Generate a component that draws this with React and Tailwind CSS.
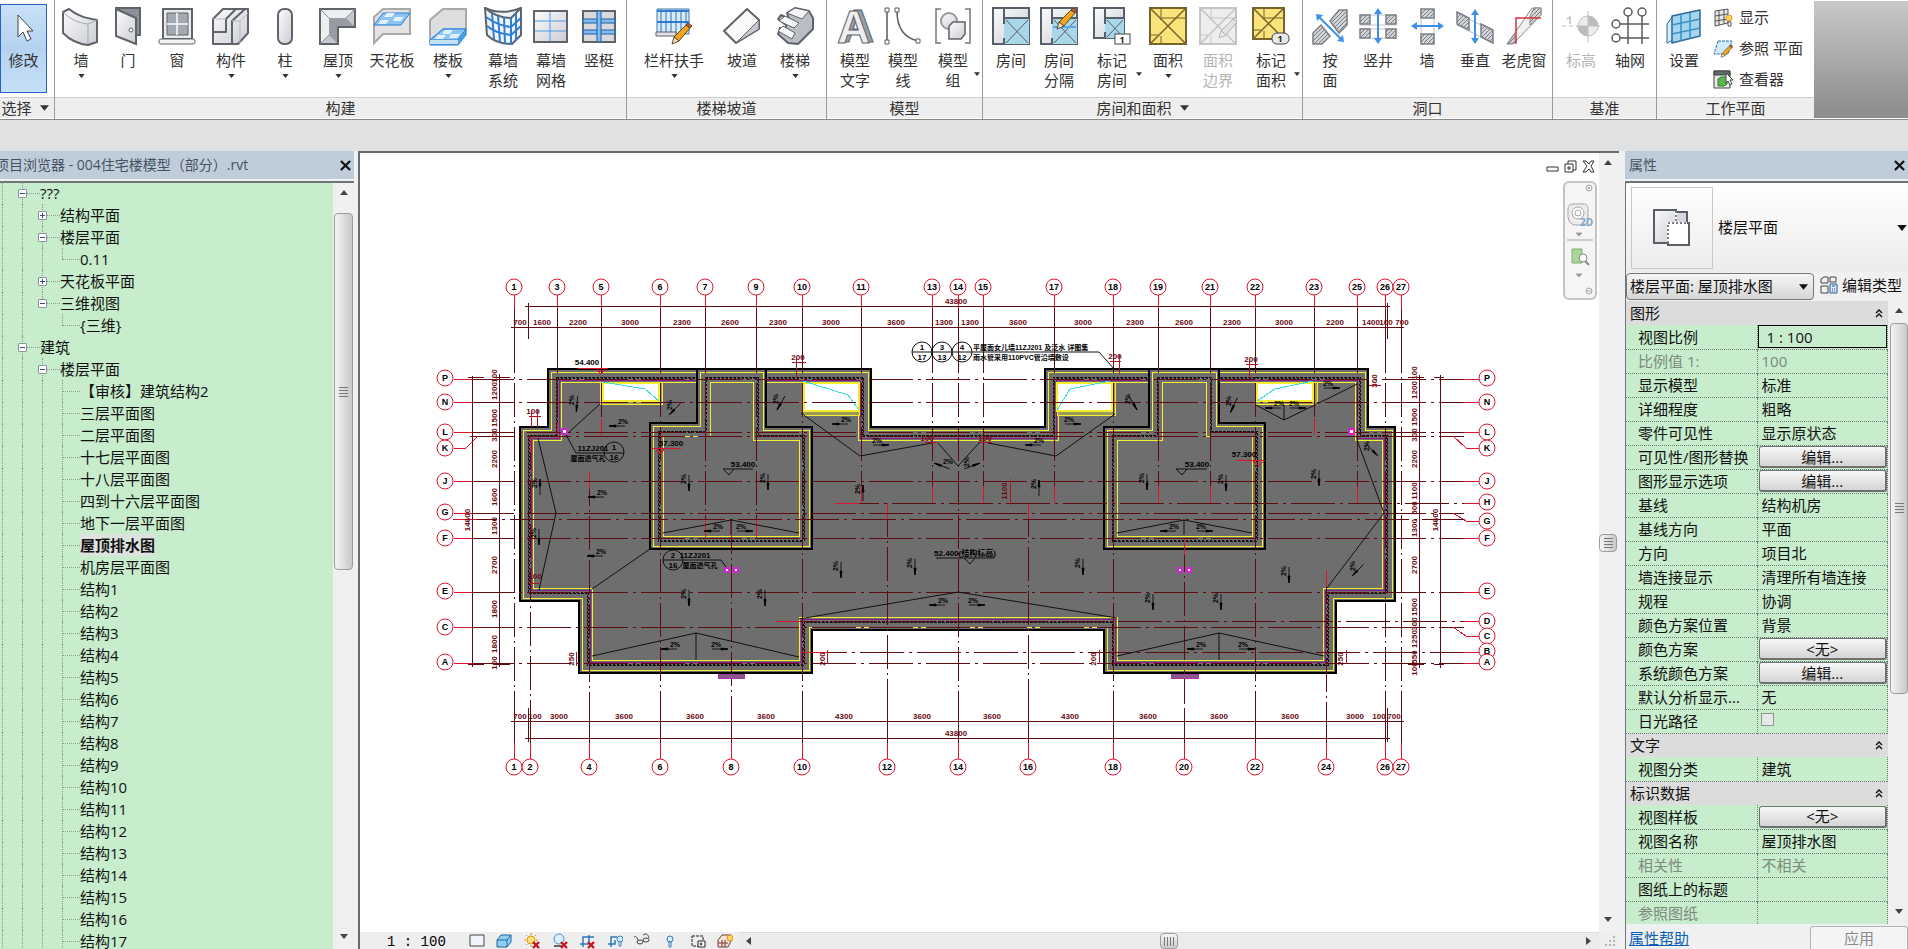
import React, { useState } from "react";

/* ---------- ribbon icons ---------- */

const INK = "#606369";
const BLUE = "#2d7fd6";

function Pencil({ x = 0, y = 0, muted }) {
  return (
    <g transform={`translate(${x} ${y})`} stroke={muted ? "#b5b5b5" : "#5b4a2a"} strokeWidth="1">
      <path d="M2 12 14 0l4 3L7 16z" fill={muted ? "#e2e2e2" : "#f2a51d"} />
      <path d="M14 0l2-2 4 3-2 2z" fill={muted ? "#d8d8d8" : "#c9532c"} />
      <path d="M2 12l5 4-7 3z" fill={muted ? "#eee" : "#f7e3bd"} />
    </g>
  );
}

function RoomBase({ muted, yellow, size = 37 }) {
  const s = size;
  const line = muted ? "#c4c4c4" : yellow ? "#75652a" : "#55606a";
  return (
    <g stroke={line} strokeWidth="2" fill="none">
      <rect x="1" y="1" width={s - 1} height={s - 1} fill={muted ? "#ededed" : yellow ? "#fbe27a" : "url(#metal)"} />
      {!muted && !yellow && <path d={`M12 12H${s}V${s}H12z`} fill="#a9d6e8" stroke="none" />}
      {yellow || muted ? (
        <g strokeWidth="1">
          <path d={`M2 2 ${s - 1} ${s - 1}M${s - 1} 2 2 ${s - 1}`} strokeWidth="1.5" />
          <path d={`M12 1v12M12 11h${s - 12}M12 ${s - 8}v8M1 ${s - 9}h8`} />
        </g>
      ) : (
        <g>
          <path d={`M12 1v16M12 11h${s - 12}M12 ${s - 6}v6`} />
          <path d={`M14 13 ${s - 1} ${s - 1}M${s - 1} 13 14 ${s - 1}`} strokeWidth="1" />
        </g>
      )}
    </g>
  );
}

const ICONS = {
  cursor: (
    <path d="M13 6v22l5-5 4 9 4-2-4-8h6z" fill="#fff" stroke="#444" strokeWidth="1" />
  ),
  wall: (
    <g stroke={INK} strokeWidth="2" strokeLinejoin="round">
      <path d="M1 5 7 2c8 7 17 9 28 11v22l-9 3C15 37 7 32 1 26z" fill="url(#metal)" />
      <path d="M1 5c8 8 16 11 25 12l9-4M26 17v20" fill="none" stroke="#a4a7ac" strokeWidth="1" />
    </g>
  ),
  door: (
    <g stroke={INK} strokeWidth="2">
      <path d="M7 1h24v27H7z" fill="#8b9099" />
      <path d="M7 2l20 9v26L7 29z" fill="url(#metal)" />
      <circle cx="22" cy="23" r="2" fill="#fff" strokeWidth="1" />
    </g>
  ),
  window: (
    <g stroke={INK} strokeWidth="2">
      <path d="M5 2h29v30H5z" fill="#e9eaec" />
      <path d="M9 6h21v22H9z" fill="#a3a9b3" strokeWidth="1" />
      <path d="M19 6v22M9 17h21" stroke="#e6e8ea" />
      <rect x="1" y="32" width="36" height="5" rx="2" fill="#f4f4f4" strokeWidth="1" />
    </g>
  ),
  component: (
    <g stroke={INK} strokeWidth="2" strokeLinejoin="round">
      <path d="M1 12 11 2h25v24L26 37H1z" fill="url(#metal)" />
      <path d="M1 25h13V12L24 2M20 37V14L33 2" fill="none" />
      <path d="M1 12h13M20 14h8l8-8M28 14v22" fill="none" stroke="#b4b7bb" strokeWidth="1" />
    </g>
  ),
  column: <rect x="12" y="2" width="14" height="35" rx="6" fill="url(#metal)" stroke={INK} strokeWidth="2" />,
  roof: (
    <g stroke={INK} strokeWidth="2">
      <path d="M1 2h35v18H19v17H1z" fill="#c4c7cc" />
      <path d="M1 2h35l-9 9H10v17l-9 9z" fill="#eceef0" stroke="none" />
      <path d="M10 11h17l9 9H19v17l-9-9z" fill="#989da5" stroke="none" />
      <path d="M1 2h35v18H19v17H1z" fill="none" />
      <path d="M1 2l18 18M36 2l-9 9M1 37l9-9" stroke="#8b8f96" strokeWidth="1" />
    </g>
  ),
  ceiling: (
    <g strokeWidth="2">
      <path d="M10 2h27v25H10L1 36V10z" fill="#e3e3e4" stroke="#a8a8a8" />
      <path d="M10 6h27l-9 12H1z" fill="#8cc5f4" stroke={BLUE} strokeWidth="1" />
      <path d="M14 6h8l-3 4h-8zM22 10h9l-3 4h-8zM8 13h8l-3 4H5z" fill="#e1f1fd" />
    </g>
  ),
  floor: (
    <g strokeWidth="2">
      <path d="M14 2h23v21H14L1 34V13z" fill="#dddedf" stroke="#a8a8a8" />
      <path d="M14 22h23v6l-8 10H1v-5z" fill="#4ba3e6" stroke={BLUE} strokeWidth="1" />
      <path d="M14 22h23l-8 11H1z" fill="#8cc5f4" stroke={BLUE} strokeWidth="1" />
      <path d="M1 33h28v4H1z" fill="#c4e2f8" />
      <path d="M16 23h8l-3 4h-8zM22 27h9l-3 4h-8zM9 28h8l-3 4H6z" fill="#e1f1fd" />
    </g>
  ),
  curtainSystem: (
    <g strokeWidth="2" fill="none">
      <path d="M1 1c10 5 24 5 36 0v27L28 37C18 37 9 34 3 28z" fill="#f1f4f7" stroke={INK} />
      <path d="M1 1c8 7 17 10 26 10L37 1" stroke={INK} />
      <path d="M27 11v26M2 10c8 6 16 9 25 10l10-9M3 19c7 6 15 8 24 9l10-9M8 6l2 26M14 9l2 26M20 10l1 27M32 6v28" stroke={BLUE} />
    </g>
  ),
  curtainGrid: (
    <g strokeWidth="2">
      <path d="M2 4h33v31H2z" fill="url(#metal)" stroke={INK} />
      <path d="M18 5v29M3 14h31M3 24h31" stroke="#4b9be8" strokeWidth="1" />
    </g>
  ),
  mullion: (
    <g strokeWidth="2">
      <path d="M3 4h32v31H3z" fill="#d7d9dd" stroke={INK} />
      <path d="M3 12h32v4H3zM3 23h32v4H3z" fill="#7dbcf5" stroke="#1f5f9e" strokeWidth="1" />
      <path d="M17 4h4v31h-4z" fill="#7dbcf5" stroke="#1f5f9e" strokeWidth="1" />
    </g>
  ),
  railing: (
    <g>
      <path d="M2 2h32v25H2z" fill="#d9ebfb" stroke="#3f75ad" />
      <path d="M2 4h32M2 15h32" stroke={BLUE} strokeWidth="2" />
      <path d="M6 3v23M11 3v23M16 3v23M21 3v23M26 3v23M31 3v23" stroke="#2e74bd" />
      <path d="M1 25h20v4H1z" fill="#dfe2e6" stroke={INK} />
      <Pencil x={17} y={18} />
    </g>
  ),
  ramp: (
    <g stroke={INK} strokeWidth="2" strokeLinejoin="round">
      <path d="M1 24 24 2l12 11v9L13 36z" fill="#fafafa" />
      <path d="M36 13v9L13 36z" fill="#c5c8cd" strokeWidth="1" />
    </g>
  ),
  stairs: (
    <g stroke={INK} strokeWidth="2" strokeLinejoin="round">
      <path d="M11 6 19 1l14 3 4 7v11L22 37l-10-1-10-9 2-6 6 3v-6l-8-6 3-4 8 4z" fill="#b9bdc4" />
      <path d="M11 6l8-5 14 3-7 8zM3 14l6-5 14 7-5 5zM2 24l5-5 12 7-3 6z" fill="#f4f5f6" strokeWidth="1" />
    </g>
  ),
  modelText: (
    <g fontFamily="'Liberation Sans', Arial, sans-serif" fontWeight="700" fontSize="46" strokeWidth="1">
      <text x="5" y="35" fill="#9a9fa7" stroke={INK}>A</text>
      <text x="1" y="36" fill="#eceef0" stroke={INK}>A</text>
    </g>
  ),
  modelLine: (
    <g fill="#fff" stroke="#5a5a5a" strokeWidth="2">
      <path d="M3 4v30M13 4c0 17 8 27 21 30" fill="none" strokeWidth="1.5" />
      <path d="M1 1h4v4H1zM1 33h4v4H1zM11 1h4v4h-4zM32 32h4v4h-4z" strokeWidth="1" />
    </g>
  ),
  modelGroup: (
    <g stroke={INK} strokeWidth="2" fill="none">
      <path d="M7 2H2v34h5M31 2h5v34h-5" stroke="#777" strokeWidth="1.5" />
      <circle cx="15" cy="14" r="8" fill="url(#metal)" stroke="#999" />
      <path d="M15 19l4-4h12v12l-4 5H15z" fill="url(#metal)" strokeWidth="1.5" />
    </g>
  ),
  room: <RoomBase />,
  roomSplit: (
    <g>
      <RoomBase />
      <path d="M13 20h23" stroke="#55a8ee" strokeWidth="2" />
      <Pencil x={17} y={3} />
    </g>
  ),
  tagRoom: (
    <g>
      <RoomBase size={31} />
      <rect x="22" y="27" width="15" height="10" fill="#fff" stroke="#444" strokeWidth="1" />
      <text x="29" y="36" fontSize="9" fontWeight="700" textAnchor="middle" fill="#222">1</text>
    </g>
  ),
  area: <RoomBase yellow />,
  areaEdge: (
    <g>
      <RoomBase muted />
      <Pencil x={20} y={12} muted />
    </g>
  ),
  tagArea: (
    <g>
      <RoomBase yellow size={32} />
      <rect x="20" y="26" width="17" height="11" rx="5" fill="#e8e8e8" stroke="#444" strokeWidth="1" />
      <text x="28" y="35" fontSize="9" fontWeight="700" textAnchor="middle" fill="#222">1</text>
    </g>
  ),
  byFace: (
    <g stroke="#7b8087">
      <path d="M36 3v15l-8 8-9-12 9-11zM2 37V26l8-8 9 11-8 8z" fill="url(#hatch)" strokeWidth="1.5" />
      <path d="M7 9l24 24" stroke="#3d8fe8" strokeWidth="2" />
      <path d="M5 7l7 1-6 6zM33 35l-7-1 6-6z" fill="#3d8fe8" stroke="none" />
    </g>
  ),
  shaft: (
    <g stroke="#7b8087">
      <path d="M1 8h36M1 18h36M1 22h36M1 31h36" stroke="#c4c4c4" />
      <path d="M1 8h10v9H1zM27 8h10v9H27zM1 22h10v9H1zM27 22h10v9H27z" fill="url(#hatch)" strokeWidth="1.5" />
      <path d="M19 4v30" stroke="#3d8fe8" strokeWidth="2" />
      <path d="M19 1l4 6h-8zM19 37l4-6h-8z" fill="#3d8fe8" stroke="none" />
    </g>
  ),
  wallOpening: (
    <g stroke="#7b8087">
      <path d="M13 2v35M26 2v35" stroke="#c2c2c2" />
      <path d="M13 2h13v9H13zM13 27h13v10H13z" fill="url(#hatch)" strokeWidth="1.5" />
      <path d="M7 19h26" stroke="#3d8fe8" strokeWidth="2" />
      <path d="M3 19l6-4v8zM36 19l-6-4v8z" fill="#3d8fe8" stroke="none" />
    </g>
  ),
  vertical: (
    <g stroke="#7b8087">
      <path d="M1 6l36 18M1 18l36 18" stroke="#b9b9b9" />
      <path d="M1 5l12 6v12L1 17zM25 17l12 6v13l-12-6z" fill="url(#hatch)" strokeWidth="1.5" />
      <path d="M19 5v28" stroke="#3d8fe8" strokeWidth="2" />
      <path d="M19 2l4 6h-8zM19 37l4-6h-8z" fill="#3d8fe8" stroke="none" />
    </g>
  ),
  dormer: (
    <g stroke="#8c8c8c">
      <path d="M27 1h9v7L8 37H2z" fill="#f1f1f1" />
      <path d="M29 1h7v7L25 18V9zM2 37l8-10v9z" fill="url(#hatch)" />
      <path d="M36 11H11v26" fill="none" stroke="#d8323a" strokeWidth="1.5" />
    </g>
  ),
  level: (
    <g stroke="#c0c0c0">
      <path d="M0 19h4M7 19h4M14 19h24M26 4v32" strokeWidth="1" />
      <circle cx="26" cy="19" r="10" fill="#ececec" />
      <path d="M26 9a10 10 0 0 1 10 10H26zM26 29a10 10 0 0 1-10-10h10z" fill="#bcbcbc" />
      <path d="M5 12l3-2v7" fill="none" strokeWidth="1.5" />
    </g>
  ),
  grid: (
    <g fill="#fff" stroke="#5a5a5a" strokeWidth="1.5">
      <path d="M17 9v28M31 9v28M9 17h29M9 31h29" />
      <circle cx="17" cy="5" r="4" />
      <circle cx="31" cy="5" r="4" />
      <circle cx="5" cy="17" r="4" />
      <circle cx="5" cy="31" r="4" />
    </g>
  ),
  setPlane: (
    <g stroke="#2f6794" strokeWidth="1.5" strokeLinejoin="round">
      <path d="M2 17l6-8v24l-6 3z" fill="#d8eefb" strokeWidth="1" />
      <path d="M7 9l28-6v26L7 36z" fill="#a3d5f1" />
      <path d="M16 8v26M25 6v26M7 18l28-6M7 27l28-6" fill="none" stroke="#3d8fc4" />
    </g>
  ),
};

const SMALL_ICONS = {
  show: (
    <g stroke="#555">
      <path d="M2 3l13-2v14L2 18z" fill="#e8e8e8" />
      <path d="M6 2v15M11 2v14M2 8l13-2M2 13l13-2" fill="none" />
      <circle cx="16" cy="10" r="3" fill="#ffd45e" stroke="#e39a1b" />
      <path d="M15 14h3v4h-3z" fill="#fff" />
    </g>
  ),
  refPlane: (
    <g>
      <path d="M5 2h14l-4 13H1z" fill="#cfeafb" stroke="#2f6fb0" strokeDasharray="3 1" />
      <g transform="translate(8 7) scale(.6)"><Pencil /></g>
    </g>
  ),
  viewer: (
    <g stroke="#444">
      <path d="M1 1h16v17H1z" fill="#e9e9e9" />
      <path d="M1 1h16v4H1z" fill="#5d6c66" />
      <path d="M5 9l3-2h6v7l-3 2H5z" fill="#5cb84f" stroke="#2d7a2a" />
      <path d="M13 3v10l2-2 2 4 2-1-2-4h3z" fill="#fff" />
    </g>
  ),
};

/* ---------- ribbon ---------- */

const GROUPS = [
  {
    title: "构建",
    items: [
      { icon: "wall", lines: ["墙"], w: "w-[46px]", drop: "below" },
      { icon: "door", lines: ["门"], w: "w-[48px]" },
      { icon: "window", lines: ["窗"], w: "w-[50px]" },
      { icon: "component", lines: ["构件"], w: "w-[58px]", drop: "below" },
      { icon: "column", lines: ["柱"], w: "w-[50px]", drop: "below" },
      { icon: "roof", lines: ["屋顶"], w: "w-[56px]", drop: "below" },
      { icon: "ceiling", lines: ["天花板"], w: "w-[52px]" },
      { icon: "floor", lines: ["楼板"], w: "w-[60px]", drop: "below" },
      { icon: "curtainSystem", lines: ["幕墙", "系统"], w: "w-[50px]" },
      { icon: "curtainGrid", lines: ["幕墙", "网格"], w: "w-[46px]" },
      { icon: "mullion", lines: ["竖梃"], w: "w-[50px]" },
    ],
  },
  {
    title: "楼梯坡道",
    items: [
      { icon: "railing", lines: ["栏杆扶手"], w: "w-[88px]", drop: "below" },
      { icon: "ramp", lines: ["坡道"], w: "w-[48px]" },
      { icon: "stairs", lines: ["楼梯"], w: "w-[58px]", drop: "below" },
    ],
  },
  {
    title: "模型",
    items: [
      { icon: "modelText", lines: ["模型", "文字"], w: "w-[50px]" },
      { icon: "modelLine", lines: ["模型", "线"], w: "w-[46px]" },
      { icon: "modelGroup", lines: ["模型", "组"], w: "w-[54px]", drop: "side" },
    ],
  },
  {
    title: "房间和面积",
    drop: true,
    items: [
      { icon: "room", lines: ["房间"], w: "w-[50px]" },
      { icon: "roomSplit", lines: ["房间", "分隔"], w: "w-[46px]" },
      { icon: "tagRoom", lines: ["标记", "房间"], w: "w-[60px]", drop: "side" },
      { icon: "area", lines: ["面积"], w: "w-[52px]", drop: "below" },
      { icon: "areaEdge", lines: ["面积", "边界"], w: "w-[48px]", disabled: true },
      { icon: "tagArea", lines: ["标记", "面积"], w: "w-[58px]", drop: "side" },
    ],
  },
  {
    title: "洞口",
    items: [
      { icon: "byFace", lines: ["按", "面"], w: "w-[48px]" },
      { icon: "shaft", lines: ["竖井"], w: "w-[48px]" },
      { icon: "wallOpening", lines: ["墙"], w: "w-[50px]" },
      { icon: "vertical", lines: ["垂直"], w: "w-[46px]" },
      { icon: "dormer", lines: ["老虎窗"], w: "w-[52px]" },
    ],
  },
  {
    title: "基准",
    items: [
      { icon: "level", lines: ["标高"], w: "w-[50px]", disabled: true },
      { icon: "grid", lines: ["轴网"], w: "w-[48px]" },
    ],
  },
];

const Caret = ({ className = "" }) => (
  <svg viewBox="0 0 8 5" className={className} aria-hidden="true"><path d="M0 0h8L4 5z" fill="currentColor" /></svg>
);

function RibbonButton({ item }) {
  return (
    <button
      type="button"
      disabled={item.disabled}
      className={`${item.w} relative flex shrink-0 flex-col items-center pt-[7px] leading-5 disabled:text-[#b4b4b4]`}
    >
      <svg viewBox="0 0 38 39" className="h-[39px] w-[38px]" fill="none">{ICONS[item.icon]}</svg>
      <span className="mt-1 whitespace-nowrap">
        {item.lines.map(l => <span key={l} className="block">{l}</span>)}
      </span>
      {item.drop === "below" && <Caret className="mt-1 h-1 w-[7px]" />}
      {item.drop === "side" && <Caret className="absolute right-0 top-[72px] h-1 w-[6px]" />}
    </button>
  );
}

function GroupTitle({ children }) {
  return (
    <div className="flex h-[21px] items-center justify-center gap-2 border-t border-[#d0d0d0] bg-[#eeeeee]">
      {children}
    </div>
  );
}

function Ribbon() {
  return (
    <header className="flex shrink-0 border-b border-[#8a8a8a] bg-white text-[15px] text-[#333]">
      <div className="flex w-[55px] shrink-0 flex-col border-r border-[#9a9a9a] pb-[1px]">
        <div className="h-[97px] pt-1">
          <button
            type="button"
            className="flex h-[89px] w-[47px] flex-col items-center border border-[#2464c4] bg-gradient-to-b from-[#c9e0f7] via-[#b4d2f0] to-[#c6dff7] pt-1 leading-5"
          >
            <svg viewBox="0 0 38 39" className="h-[39px] w-[38px]">{ICONS.cursor}</svg>
            <span className="mt-[2px]">修改</span>
          </button>
        </div>
        <GroupTitle>
          <span className="-ml-1">选择</span>
          <Caret className="h-[6px] w-[9px]" />
        </GroupTitle>
      </div>
      {GROUPS.map(g => (
        <div key={g.title} className="flex shrink-0 flex-col border-r border-[#9a9a9a] pb-[1px]">
          <div className="flex h-[97px] pl-[3px] pr-[2px]">
            {g.items.map(it => <RibbonButton key={it.icon} item={it} />)}
          </div>
          <GroupTitle>
            <span>{g.title}</span>
            {g.drop && <Caret className="h-[6px] w-[9px]" />}
          </GroupTitle>
        </div>
      ))}
      <div className="flex w-[157px] shrink-0 flex-col pb-[1px]">
        <div className="flex h-[97px] px-[2px]">
          <RibbonButton item={{ icon: "setPlane", lines: ["设置"], w: "w-[50px]" }} />
          <div className="flex flex-col pl-1 pt-[2px]">
            {[["show", "显示"], ["refPlane", "参照 平面"], ["viewer", "查看器"]].map(([id, label]) => (
              <button key={id} type="button" className="flex h-[31px] items-center gap-[6px] whitespace-nowrap">
                <svg viewBox="0 0 20 19" className="h-[19px] w-5" fill="none">{SMALL_ICONS[id]}</svg>
                {label}
              </button>
            ))}
          </div>
        </div>
        <GroupTitle>工作平面</GroupTitle>
      </div>
      <div className="mb-[1px] mt-[1px] flex-1 bg-gradient-to-b from-[#c8c8c8] to-[#8c8c8c]" />
    </header>
  );
}

/* ---------- shared chrome ---------- */

function Arrow({ dir, label }) {
  const d = { up: "M0 5h8L4 0z", down: "M0 0h8L4 5z", left: "M6 0v8L1 4z", right: "M1 0v8l5-4z" }[dir];
  return (
    <button type="button" aria-label={label} className="flex h-[22px] w-full items-center justify-center">
      <svg viewBox="0 0 8 8" className="h-2 w-2"><path d={d} fill="#444" /></svg>
    </button>
  );
}

function Grip() {
  return (
    <span className="flex flex-col gap-[2px]">
      {[0, 1, 2, 3].map(i => <span key={i} className="block h-px w-[9px] bg-[#777]" />)}
    </span>
  );
}

const THUMB = "flex w-full items-center justify-center rounded-sm border border-[#9c9c9c] bg-gradient-to-r from-[#f4f4f4] to-[#c9c9c9]";

function PanelTitle({ children, pull = "" }) {
  return (
    <div className="flex h-7 shrink-0 items-center justify-between bg-[#bfcddb] pl-1 text-sm text-[#46535f]">
      <h2 className={`whitespace-nowrap ${pull}`}>{children}</h2>
      <button type="button" aria-label="关闭" className="flex h-5 w-[18px] shrink-0 items-center justify-center">
        <svg viewBox="0 0 12 12" className="h-[11px] w-[11px]"><path d="M1 1l10 10M11 1 1 11" stroke="#111" strokeWidth="2.4" /></svg>
      </button>
    </div>
  );
}

/* ---------- project browser ---------- */

// [text, toggle, ancestor guides, last child]
const TREE = [
  ["???", "-", [1]],
  ["结构平面", "+", [1, 1]],
  ["楼层平面", "-", [1, 1]],
  ["0.11", "", [1, 1, 1], true],
  ["天花板平面", "+", [1, 1]],
  ["三维视图", "-", [1, 1], true],
  ["{三维}", "", [1, 1, 0], true],
  ["建筑", "-", [1]],
  ["楼层平面", "-", [1, 1]],
  ...[
    "【审核】建筑结构2", "三层平面图", "二层平面图", "十七层平面图", "十八层平面图",
    "四到十六层平面图", "地下一层平面图", "屋顶排水图", "机房层平面图",
    ...Array.from({ length: 17 }, (_, i) => `结构${i + 1}`),
  ].map(t => [t, "", [1, 1, 1]]),
];

function TreeRow({ row, selected, onSelect }) {
  const [text, toggle, guides, last] = row;
  return (
    <li className="flex h-[22px] shrink-0 items-stretch pl-[2px]">
      {guides.map((on, i) => (
        <span key={i} className={`w-5 border-l border-dotted ${on ? "border-[#8a9a8c]" : "border-transparent"}`} />
      ))}
      <span className="relative flex w-[18px] items-center">
        <span className={`absolute left-0 top-0 border-l border-dotted border-[#8a9a8c] ${last ? "h-1/2" : "h-full"}`} />
        {toggle && (
          <button
            type="button"
            aria-label={toggle === "-" ? "折叠" : "展开"}
            className="relative -ml-1 flex h-[9px] w-[9px] shrink-0 items-center justify-center rounded-[1px] border border-[#8b93a0] bg-white"
          >
            <span className="absolute h-px w-[5px] bg-[#3c4c8c]" />
            {toggle === "+" && <span className="absolute h-[5px] w-px bg-[#3c4c8c]" />}
          </button>
        )}
        <span className="flex-1 border-t border-dotted border-[#8a9a8c]" />
      </span>
      <button
        type="button"
        onClick={onSelect}
        className={`whitespace-nowrap leading-5 ${selected ? "bg-[#dfe3e0] font-bold" : ""}`}
      >
        {text}
      </button>
    </li>
  );
}

function ProjectBrowser() {
  const [selected, setSelected] = useState("屋顶排水图");
  return (
    <aside className="flex w-[354px] shrink-0 flex-col">
      <PanelTitle pull="-ml-[9px]">项目浏览器 - 004住宅楼模型（部分）.rvt</PanelTitle>
      <div className="mt-[2px] flex min-h-0 flex-1 border-t-2 border-[#6f7478] bg-[#c7edcc]">
        <ul className="-mt-px flex min-w-0 flex-1 flex-col overflow-hidden text-[15px] text-[#111]">
          {TREE.map((row, i) => (
            <TreeRow key={i} row={row} selected={row[0] === selected} onSelect={() => setSelected(row[0])} />
          ))}
        </ul>
        <div className="flex w-[21px] flex-col bg-[#f0f0f0] px-[1px]">
          <Arrow dir="up" label="向上滚动" />
          <div className="flex flex-1 flex-col pt-2">
            <div className={`${THUMB} h-[50%]`}><Grip /></div>
          </div>
          <Arrow dir="down" label="向下滚动" />
        </div>
      </div>
    </aside>
  );
}

/* ---------- roof plan drawing ---------- */

const RED = "#e0142f";
const MAROON = "#5e0c12";
const TOP = 287;
const BOTTOM = 767;

// [label, x, top end, bottom end, bubble on top, bubble at bottom]
const COLS = [
  ["1", 514, 295, 759, 1, 1], ["2", 530, 436, 759, 0, 1], ["3", 557, 295, 440, 1, 0],
  ["4", 589, 472, 759, 0, 1], ["5", 601, 295, 436, 1, 0], ["6", 660, 295, 759, 1, 1],
  ["7", 705, 295, 537, 1, 0], ["8", 731, 520, 759, 0, 1], ["9", 756, 295, 537, 1, 0],
  ["10", 802, 295, 759, 1, 1], ["11", 861, 295, 503, 1, 0], ["12", 887, 503, 759, 0, 1],
  ["13", 932, 295, 503, 1, 0], ["14", 958, 295, 759, 1, 1], ["15", 983, 295, 503, 1, 0],
  ["16", 1028, 503, 759, 0, 1], ["17", 1054, 295, 503, 1, 0], ["18", 1113, 295, 759, 1, 1],
  ["19", 1158, 295, 503, 1, 0], ["20", 1184, 538, 759, 0, 1], ["21", 1210, 295, 503, 1, 0],
  ["22", 1255, 295, 759, 1, 1], ["23", 1314, 295, 435, 1, 0], ["24", 1326, 570, 759, 0, 1],
  ["25", 1357, 295, 503, 1, 0], ["26", 1385, 295, 759, 1, 1], ["27", 1401, 295, 759, 1, 1],
];

// [label, line y, left bubble y, right bubble y, start x]
const ROWS = [
  ["P", 379, 378, 378], ["N", 402, 402, 402], ["L", 432, 432, 432], ["K", 436, 448, 448],
  ["J", 481, 481, 481], ["H", 503, 0, 502, 835], ["G", 513, 512, 521], ["", 519, 0, 0, 453],
  ["F", 538, 538, 538], ["E", 592, 591, 591], ["D", 621, 0, 621, 776], ["C", 627, 627, 636],
  ["B", 652, 0, 651, 803], ["A", 663, 662, 662],
];

const ROOF = [
  [548, 369], [871, 369], [871, 427], [1045, 427], [1045, 369], [1368, 369], [1368, 427], [1395, 427],
  [1395, 601], [1336, 601], [1336, 673], [1104, 673], [1104, 630], [812, 630], [812, 673], [579, 673],
  [579, 601], [520, 601], [520, 427], [548, 427],
];
const CORE_LEFT = [[697, 369], [766, 369], [766, 427], [812, 427], [812, 549], [650, 549], [650, 423], [697, 423]];
const CORE_RIGHT = [[1149, 369], [1219, 369], [1219, 423], [1265, 423], [1265, 549], [1104, 549], [1104, 427], [1149, 427]];

// shrinks a clockwise right-angled outline by d
function inset(points, d) {
  const n = points.length;
  return points.map(([x, y], i) => {
    const [px, py] = points[(i + n - 1) % n];
    const [nx, ny] = points[(i + 1) % n];
    const ox = -Math.sign(y - py) - Math.sign(ny - y);
    const oy = Math.sign(x - px) + Math.sign(nx - x);
    return [x + ox * d, y + oy * d];
  });
}

const pts = list => list.map(p => p.join(",")).join(" ");

function Walls({ outline, purple }) {
  return (
    <g fill="none">
      <polygon points={pts(outline)} fill="#6e6e6e" stroke="#000" strokeWidth="2" />
      <polygon points={pts(inset(outline, 3))} stroke="#f4ee2e" />
      <polygon points={pts(inset(outline, 8))} stroke="#111" strokeDasharray="3 1" />
      <polygon points={pts(inset(outline, 9))} stroke="#111" strokeDasharray="2 2" />
      {purple && <polygon points={pts(inset(outline, 11))} stroke="#8a1c86" />}
      <polygon points={pts(inset(outline, 13))} stroke="#f4ee2e" />
    </g>
  );
}

const HIPS = [
  "600,404 568,433", "538,438 556,513 539,590", "650,549 592,589", "663,533 731,520 799,533", "731,520 731,535",
  "592,656 696,633 799,657", "696,633 696,660", "799,619 958,592 1117,618", "801,413 860,456 932,443",
  "938,443 958,466 980,442", "988,443 1056,456 1115,414", "1256,405 1284,420 1315,405 1357,384", "1284,405 1284,420",
  "1357,440 1384,513 1327,588", "1117,533 1184,520 1252,533", "1184,520 1184,535", "1117,656 1219,633 1324,656",
  "1219,633 1219,660", "564,431 576,453 624,453", "663,560 721,560 728,570", "912,352 1099,352 1115,370",
];

// [x, y, arrow angle]
const SLOPES = [
  [577, 404, 95], [675, 409, 135], [617, 426, 180], [540, 487, 270], [596, 497, 180], [689, 483, 90],
  [768, 482, 90], [781, 403, 120], [840, 424, 180], [863, 493, 270], [712, 531, 180], [745, 531, 0],
  [539, 537, 90], [595, 556, 180], [841, 570, 90], [915, 567, 90], [689, 598, 90], [765, 598, 90],
  [669, 649, 180], [720, 649, 0], [937, 605, 180], [977, 605, 0], [881, 445, 0], [1033, 445, 180],
  [942, 466, 200], [972, 466, 340], [1039, 488, 270], [1073, 424, 0], [1133, 403, 60], [1147, 482, 90],
  [1226, 483, 90], [1234, 405, 115], [1319, 478, 90], [1332, 388, 0], [1273, 408, 180], [1298, 408, 0],
  [1372, 450, 45], [1168, 531, 180], [1205, 531, 0], [1358, 570, 135], [1289, 575, 90], [1083, 567, 90],
  [1153, 602, 90], [1221, 602, 90], [1195, 649, 180], [1247, 649, 0],
];

const TOP_DIMS = [
  ["700", 520], ["1600", 542], ["2200", 578], ["3000", 630], ["2300", 682], ["2600", 730], ["2300", 778],
  ["3000", 831], ["3600", 896], ["1300", 944], ["1300", 970], ["3600", 1018], ["3000", 1083], ["2300", 1135],
  ["2600", 1184], ["2300", 1232], ["3000", 1284], ["2200", 1335], ["1400", 1371], ["100", 1386], ["700", 1402],
];
const BOTTOM_DIMS = [
  ["700", 520], ["100", 535], ["3000", 559], ["3600", 624], ["3600", 695], ["3600", 766], ["4300", 844],
  ["3600", 922], ["3600", 992], ["4300", 1070], ["3600", 1148], ["3600", 1219], ["3600", 1290], ["3000", 1355],
  ["100", 1379], ["700", 1394],
];
const LEFT_DIMS = [
  ["100", 376], ["1200", 391], ["1500", 418], ["300", 435], ["2200", 459], ["1600", 497], ["1300", 526],
  ["2700", 565], ["1800", 609], ["1800", 644], ["100", 663],
];
const RIGHT_DIMS = [
  ["100", 373], ["1200", 390], ["1500", 417], ["300", 435], ["2200", 459], ["1100", 491], ["500", 508],
  ["1300", 528], ["2700", 565], ["1500", 607], ["300", 624], ["1250", 639], ["550", 657], ["100", 669],
];

function Bubble({ x, y, label }) {
  return (
    <g>
      <circle cx={x} cy={y} r="8" fill="#fff" stroke={RED} shapeRendering="auto" />
      <text x={x} y={y + 3} fontSize="9" fontWeight="700" textAnchor="middle" fill="#000">{label}</text>
    </g>
  );
}

function VText({ x, y, children }) {
  return <text transform={`translate(${x} ${y}) rotate(-90)`} y="3" textAnchor="middle">{children}</text>;
}

function RoofPlan() {
  return (
    <svg
      viewBox="360 153 1239 779"
      className="block h-full w-full"
      role="img"
      aria-label="屋顶排水图"
      shapeRendering="crispEdges"
      fontFamily="'Liberation Sans Narrow', 'Liberation Sans', 'Noto Sans CJK SC', sans-serif"
      fontSize="8"
    >
      <Walls outline={ROOF} purple />
      <Walls outline={CORE_LEFT} />
      <Walls outline={CORE_RIGHT} />

      {/* shaft openings */}
      <g fill="#9a9a5a" stroke="#f4ee2e">
        <path d="M600 382h62v22h-62zM802 382h57v33h-57zM1057 382h58v33h-58zM1255 382h62v22h-62z" />
        <path d="M603 383h56v18h-56zM804 383h55v28h-55zM1057 383h55v28h-55zM1257 383h56v18h-56z" fill="#fff" strokeWidth="2" />
      </g>
      <g fill="none" stroke="#35dbe0">
        <polyline points="603,382 645,389 659,401" />
        <polyline points="803,381 848,395 859,410" />
        <polyline points="1110,381 1070,389 1057,410" />
        <polyline points="1313,381 1275,389 1257,401" />
      </g>

      {/* grid lines */}
      <g stroke={MAROON}>
        {COLS.map(([l, x, y1, y2, t, b]) => (
          <g key={l}>
            <path d={`M${x} ${y1}V${y2}`} strokeDasharray="34 4 2 4" />
            {t ? <path d={`M${x} 295V342`} /> : null}
            {b ? <path d={`M${x} 708V759`} /> : null}
            {t ? <path d={`M${x} 295v14`} stroke={RED} /> : <path d={`M${x} ${y1}v17`} stroke={RED} />}
            {b ? <path d={`M${x} 743v16`} stroke={RED} /> : <path d={`M${x} ${y2}v-17`} stroke={RED} />}
          </g>
        ))}
        {ROWS.map(([l, y, ly, ry, start]) => (
          <g key={y} fill="none">
            <path d={`M${start || 470} ${y}H1464`} strokeDasharray="44 5 3 5" />
            {ly ? <path d={ly - y > 5 ? `M454 ${ly}h12l12 ${y - ly}` : `M454 ${y}h18`} stroke={RED} /> : null}
            {ry ? <path d={Math.abs(ry - y) > 5 ? `M1453 ${y}l13 ${ry - y}h13` : `M1464 ${y}h15`} stroke={RED} /> : null}
            {start ? <path d={`M${start} ${y}h24`} stroke={RED} /> : null}
          </g>
        ))}
        {/* dimension strings */}
        <path d="M525 306h865M511 327h893M511 721h893M525 738h865" />
        <path d="M528 303v36M1387 303v36M528 708v34M1387 708v34" />
        <path d="M472 376v291M499 374v293M1419 375v293M1440 375v293" />
        <path d="M468 377h16M494 377h16M468 664h16M494 664h16M1408 377h16M1434 377h10M1408 664h16M1434 664h10" />
      </g>

      {COLS.map(([l, x, , , t, b]) => (
        <g key={l}>
          {t ? <Bubble x={x} y={TOP} label={l} /> : null}
          {b ? <Bubble x={x} y={BOTTOM} label={l} /> : null}
        </g>
      ))}
      {ROWS.map(([l, y, ly, ry]) => (
        <g key={y}>
          {ly ? <Bubble x={445} y={ly} label={l} /> : null}
          {ry ? <Bubble x={1487} y={ry} label={l} /> : null}
        </g>
      ))}

      <g fill="#6a0a12" textAnchor="middle" fontWeight="700">
        {TOP_DIMS.map(([t, x]) => <text key={x} x={x} y="325">{t}</text>)}
        {BOTTOM_DIMS.map(([t, x]) => <text key={x} x={x} y="719">{t}</text>)}
        <text x="956" y="304">43800</text>
        <text x="956" y="736">43800</text>
        {LEFT_DIMS.map(([t, y]) => <VText key={y} x={494} y={y}>{t}</VText>)}
        {RIGHT_DIMS.map(([t, y]) => <VText key={y} x={1414} y={y}>{t}</VText>)}
        <VText x={467} y={520}>14600</VText>
        <VText x={1435} y={520}>14600</VText>
        <text x="533" y="414">100</text>
        <text x="798" y="360">200</text>
        <text x="1115" y="359">200</text>
        <text x="1251" y="362">200</text>
        <text x="535" y="579">100</text>
        <text x="927" y="441">100</text>
        <text x="985" y="441">100</text>
        <VText x={571} y={659}>250</VText>
        <VText x={822} y={659}>200</VText>
        <VText x={1093} y={659}>200</VText>
        <VText x={1340} y={659}>250</VText>
        <VText x={1374} y={381}>300</VText>
        <VText x={1004} y={491}>1100</VText>
      </g>
      <g stroke="#b3121f" fill="none">
        <path d="M529 416h12M531 410v17M537 410v17M792 362h14M796 358v20M1110 361h11M1119 354v20M1246 364h12M1249 360v18" />
        <path d="M529 583h10M925 442h12M980 442h12M576 652v14M827 650v14M1099 650v14M1346 650v14M1369 385h12M1010 479v26" />
        <path d="M578 368h30M596 368l5 6 5-6M652 448h29M655 448l5 6 5-6M1236 460h28M1252 460l7 6 6-6" stroke={RED} />
      </g>

      <g fill="none" stroke="#111" shapeRendering="auto">
        {HIPS.map(p => <polyline key={p} points={p} />)}
        <path d="M723 469h30M723 469l6 6 5-6M1176 469h31M1176 469l6 6 5-6M936 558h58M964 558l6 6 5-6" />
        <circle cx="614" cy="452" r="10" />
        <circle cx="673" cy="560" r="10" />
        <circle cx="922" cy="352" r="10" />
        <circle cx="942" cy="352" r="10" />
        <circle cx="962" cy="352" r="10" />
      </g>

      <g fill="#000" stroke="#000" shapeRendering="auto">
        {SLOPES.map(([x, y, a]) => (
          <g key={`${x}-${y}`}>
            <path transform={`translate(${x} ${y}) rotate(${a})`} d="M-8 0H8M8 0 1-1V1z" strokeWidth=".8" />
            {a % 180 < 45 ? (
              <text x={x + (a > 90 ? 6 : -4)} y={y - 2} fontSize="7" textAnchor="middle" stroke="none" fontWeight="700">2%</text>
            ) : (
              <text transform={`translate(${x - 3} ${y - 4}) rotate(-90)`} fontSize="7" textAnchor="middle" stroke="none" fontWeight="700">2%</text>
            )}
          </g>
        ))}
      </g>

      <g fill="#000" textAnchor="middle" fontWeight="700">
        <text x="587" y="365">54.400</text>
        <text x="671" y="446">57.300</text>
        <text x="743" y="467">53.400</text>
        <text x="1197" y="467">53.400</text>
        <text x="1244" y="457">57.300</text>
        <text x="965" y="556">52.400(结构标高)</text>
        <text x="593" y="451">11ZJ201</text>
        <text x="588" y="461" fontSize="7">屋面透气孔</text>
        <text x="614" y="450">1</text>
        <text x="614" y="460">16</text>
        <text x="695" y="558">11ZJ201</text>
        <text x="700" y="568" fontSize="7">屋面透气孔</text>
        <text x="673" y="558">2</text>
        <text x="673" y="568">16</text>
        <text x="922" y="350">1</text>
        <text x="922" y="360">17</text>
        <text x="942" y="350">3</text>
        <text x="942" y="360">13</text>
        <text x="962" y="350">4</text>
        <text x="962" y="360">12</text>
      </g>
      <g fill="#000" fontSize="7" fontWeight="700">
        <text x="973" y="350">平屋面女儿墙11ZJ201 及泛水 详图集</text>
        <text x="973" y="360">雨水管采用110PVC管沿墙敷设</text>
      </g>

      <g fill="#fff" stroke="#d622d6" strokeWidth="2">
        <path d="M562 429h5v5h-5zM1349 429h5v5h-5z" />
        <path d="M725 568h4v4h-4zM734 568h4v4h-4zM1178 568h4v4h-4zM1187 568h4v4h-4z" />
      </g>
      <g fill="#8a5a8a" stroke="#a13ca6">
        <path d="M718 674h26v4h-26zM1171 674h27v4h-27z" />
      </g>
    </svg>
  );
}

/* ---------- view window ---------- */

const RedX = () => <path d="M9 9l6 6M15 9l-6 6" stroke="#c8141c" strokeWidth="2.4" />;

const VIEW_ICONS = [
  ["详细程度", <path d="M1 2h14v11H1z" fill="#f1f3fa" stroke="#444" />],
  ["视觉样式", <path d="M1 7l4-5h10v7l-4 5H1zM1 7h10v7M11 7l4-5" fill="#8fd0f2" stroke="#1e639c" />],
  ["日光路径", <g><circle cx="7" cy="7" r="4" fill="#ffe07a" stroke="#d99a15" /><path d="M7 0v2M7 12v2M0 7h2M12 7h2M2 2l1 1M12 2l-1 1M2 12l1-1" stroke="#d99a15" /><RedX /></g>],
  ["阴影", <g><circle cx="7" cy="6" r="5" fill="#dceffc" stroke="#4a90c8" /><path d="M2 13h8" stroke="#666" strokeWidth="2" /><RedX /></g>],
  ["裁剪视图", <g><path d="M4 14V4h11M1 11h9V2" fill="none" stroke="#2f78c0" strokeWidth="1.5" /><RedX /></g>],
  ["显示裁剪区域", <g><path d="M4 14V4h6M1 11h7V7" fill="none" stroke="#2f78c0" strokeWidth="1.5" /><circle cx="13" cy="6" r="3" fill="#d6eefc" stroke="#3a86c4" /><path d="M12 9h2v4h-2z" fill="#fff" stroke="#3a86c4" /></g>],
  ["临时隐藏", <g fill="none" stroke="#444"><path d="M0 4c2-1 3 0 4 3M9 2c3-2 5-1 6 3" /><ellipse cx="6" cy="9" rx="3" ry="2" /><ellipse cx="12" cy="7" rx="3" ry="2" /></g>],
  ["显示隐藏图元", <g><circle cx="8" cy="6" r="3" fill="#d6eefc" stroke="#2f78c0" /><path d="M7 9h2v5H7z" fill="#fff" stroke="#2f78c0" /></g>],
  ["临时视图属性", <g fill="none" stroke="#222"><path d="M2 3h11v10H2z" strokeDasharray="3 1" /><path d="M8 8h7v6H8z" fill="#fff" /><circle cx="11" cy="11" r="1" /></g>],
  ["分析模型", <g><path d="M1 7l4-5h9v6l-3 6H1zM5 7v7M1 10h10M8 7v7" fill="#f3e0dc" stroke="#7a3a34" /><circle cx="13" cy="5" r="3" fill="#ffd863" stroke="#d99a15" /></g>],
];

function NavBar() {
  return (
    <div className="absolute right-[2px] top-7 flex h-[119px] w-[34px] flex-col items-center rounded-md border-2 border-[#c4c4c4] bg-[#f5f5f5] text-[#999]">
      <svg viewBox="2 0 30 115" className="h-full w-full" fill="none" stroke="#a5a5a5" strokeWidth="1">
        <circle cx="26" cy="5" r="3" />
        <path d="M25 4l2 2M27 4l-2 2" />
        <path d="M5 26c0-4 3-5 6-5h9c4 0 5 2 5 6v9c0 5-3 6-7 6h-5c-6 0-8-5-8-9z" fill="#ececec" />
        <circle cx="15" cy="30" r="6" fill="#fff" />
        <circle cx="15" cy="30" r="3" />
        <text x="17" y="43" fontSize="10" fontWeight="700" fill="#7ea3c4" stroke="none">2D</text>
        <path d="M13 50h6l-3 3z" fill="#999" />
        <path d="M4 57h26" />
        <path d="M9 66h10v14H9z" fill="#a9d79a" stroke="#7fae74" />
        <circle cx="20" cy="75" r="4" fill="#fff" stroke="#888" />
        <path d="M22 78l4 4" stroke="#888" strokeWidth="2" />
        <path d="M13 91h6l-3 3z" fill="#999" />
        <circle cx="26" cy="108" r="3" />
        <path d="M24 108h4" />
      </svg>
    </div>
  );
}

function ViewWindow() {
  return (
    <main className="ml-1 flex min-w-0 flex-1 flex-col border-l-2 border-t-2 border-[#6b6b6b] bg-white">
      <div className="flex min-h-0 flex-1">
        <div className="relative min-w-0 flex-1 overflow-hidden">
          <RoofPlan />
          <div className="absolute right-1 top-[7px] flex gap-[5px]">
            {[
              ["最小化", "M1 7h11v4H1z"],
              ["还原", "M4 4V1h8v9H9M1 4h8v8H1zM4 7h2v2H4z"],
              ["关闭视图", "M1 1h3l3 3 2-3h3L9 6l3 6H9L7 9l-3 3H1l4-6z"],
            ].map(([label, d]) => (
              <button key={label} type="button" aria-label={label} className="h-[13px] w-[13px]">
                <svg viewBox="0 0 13 13" className="h-full w-full"><path d={d} fill="none" stroke="#333" /></svg>
              </button>
            ))}
          </div>
          <NavBar />
        </div>
        <div className="flex w-5 flex-col bg-[#f0f0f0] pr-[2px]">
          <Arrow dir="up" label="向上滚动" />
          <div className="flex flex-1 flex-col justify-center">
            <div className={`${THUMB} h-[18px]`}><Grip /></div>
          </div>
          <Arrow dir="down" label="向下滚动" />
        </div>
      </div>
      <div className="flex h-[17px] shrink-0 items-center bg-[#eeeeee]">
        <span className="w-[103px] whitespace-pre pl-[27px] pt-[2px] font-['Liberation_Mono','Noto_Sans_CJK_SC',monospace] text-sm leading-none text-black">1 : 100</span>
        <div className="flex w-[276px] justify-around">
          {VIEW_ICONS.map(([label, art]) => (
            <button key={label} type="button" aria-label={label} className="h-4 w-4">
              <svg viewBox="0 0 16 16" className="h-full w-full">{art}</svg>
            </button>
          ))}
        </div>
        <div className="flex h-full flex-1 items-center border-t border-[#dcdcdc] bg-[#ebebeb]">
          <span className="w-5"><Arrow dir="left" label="向左滚动" /></span>
          <div className="flex flex-1 justify-center">
            <div className="flex h-4 w-[18px] items-center justify-center gap-[2px] rounded-sm border border-[#9c9c9c] bg-gradient-to-b from-[#f6f6f6] to-[#cccccc]">
              {[0, 1, 2, 3].map(i => <span key={i} className="h-[9px] w-px bg-[#777]" />)}
            </div>
          </div>
          <span className="w-5"><Arrow dir="right" label="向右滚动" /></span>
        </div>
        <svg viewBox="0 0 20 17" className="h-[17px] w-5">
          <path d="M14 4h2v2h-2zM10 8h2v2h-2zM14 8h2v2h-2zM6 12h2v2H6zM10 12h2v2h-2zM14 12h2v2h-2z" fill="#b5b5b5" />
        </svg>
      </div>
    </main>
  );
}

/* ---------- properties ---------- */

const PROPS = [
  { section: "图形" },
  { name: "视图比例", value: "1 : 100", kind: "input" },
  { name: "比例值 1:", value: "100", muted: true },
  { name: "显示模型", value: "标准" },
  { name: "详细程度", value: "粗略" },
  { name: "零件可见性", value: "显示原状态" },
  { name: "可见性/图形替换", value: "编辑...", kind: "button" },
  { name: "图形显示选项", value: "编辑...", kind: "button" },
  { name: "基线", value: "结构机房" },
  { name: "基线方向", value: "平面" },
  { name: "方向", value: "项目北" },
  { name: "墙连接显示", value: "清理所有墙连接" },
  { name: "规程", value: "协调" },
  { name: "颜色方案位置", value: "背景" },
  { name: "颜色方案", value: "<无>", kind: "button" },
  { name: "系统颜色方案", value: "编辑...", kind: "button" },
  { name: "默认分析显示...", value: "无" },
  { name: "日光路径", kind: "check" },
  { section: "文字" },
  { name: "视图分类", value: "建筑" },
  { section: "标识数据" },
  { name: "视图样板", value: "<无>", kind: "button" },
  { name: "视图名称", value: "屋顶排水图" },
  { name: "相关性", value: "不相关", muted: true },
  { name: "图纸上的标题", value: "" },
  { name: "参照图纸", value: "", muted: true },
];

function PropValue({ row }) {
  if (row.kind === "input") {
    return (
      <input
        aria-label={row.name}
        defaultValue={row.value}
        className="block h-[23px] w-full border border-black bg-[#c7edcc] pl-2 outline-none"
      />
    );
  }
  if (row.kind === "button") {
    return (
      <button
        type="button"
        aria-label={`${row.name} ${row.value}`}
        className="ml-px block h-[22px] w-[calc(100%-1px)] rounded-[3px] border border-b-2 border-r-2 border-[#707070] bg-gradient-to-b from-[#f8f8f8] to-[#d4d4d4] leading-[18px]"
      >
        {row.value}
      </button>
    );
  }
  if (row.kind === "check") {
    return (
      <input
        type="checkbox"
        aria-label={row.name}
        className="mb-1 ml-[3px] block h-[13px] w-[13px] appearance-none border border-[#8c9a8e] bg-[#e6e8ea]"
      />
    );
  }
  return <span className="block truncate pl-1">{row.value}</span>;
}

function Properties() {
  return (
    <aside className="ml-[6px] flex w-[283px] shrink-0 flex-col overflow-hidden bg-[#f0f0f0] text-[15px] text-[#111]">
      <PanelTitle>属性</PanelTitle>
      <div className="mt-[2px] flex min-h-0 flex-1 flex-col border-l border-t-2 border-[#6f7478]">
        <div className="flex h-[89px] shrink-0 items-center bg-gradient-to-b from-white to-[#ececec] pl-[5px]">
          <div className="flex h-[82px] w-[82px] items-center justify-center border border-[#c8c8c8]">
            <svg viewBox="0 0 40 40" className="h-10 w-10" strokeWidth="2">
              <path d="M24 4h11v30H24z" fill="#d5d9df" stroke="#5a5f66" />
              <path d="M2 2h22v33H2z" fill="url(#metal)" stroke="#5a5f66" />
              <path d="M16 15h21v22H16z" fill="#fff" stroke="#5a5f66" />
              <path d="M24 3v12M16 35V15h19" fill="none" stroke="#fff" />
              <path d="M24 3v12M16 35V15h19" fill="none" stroke="#555" strokeWidth="1.5" strokeDasharray="2 2" />
            </svg>
          </div>
          <span className="flex-1 pl-[5px]">楼层平面</span>
          <Caret className="mr-[1px] h-[6px] w-[10px]" />
        </div>
        <div className="flex h-[29px] shrink-0 items-center gap-[6px]">
          <div className="relative w-[188px] shrink-0">
            <select
              aria-label="视图"
              className="block h-[27px] w-full appearance-none rounded-sm border border-[#777] bg-gradient-to-b from-[#f6f6f6] to-[#d6d6d6] pl-[3px] outline-none"
            >
              <option>楼层平面: 屋顶排水图</option>
            </select>
            <Caret className="pointer-events-none absolute right-[6px] top-[11px] h-[6px] w-[9px]" />
          </div>
          <button type="button" className="flex items-center gap-1 whitespace-nowrap pb-[3px]">
            <svg viewBox="0 0 18 18" className="h-[18px] w-[18px]" fill="none" stroke="#444">
              <path d="M1 3l3-2h4v6H1zM1 10h7v7H1zM10 1h6v5h-6z" />
              <path d="M10 8h7v9h-7z" fill="#d9e8f8" stroke="#2a5a9a" />
              <path d="M12 10h3M12 13h1M14 13h1M12 15h1M14 15h1" stroke="#2a5a9a" />
            </svg>
            编辑类型
          </button>
        </div>
        <div className="flex min-h-0 flex-1">
          <div className="min-w-0 flex-1 overflow-hidden bg-[#c7edcc]">
            <table className="w-full table-fixed border-collapse">
              <colgroup>
                <col className="w-[131px]" />
                <col />
              </colgroup>
              <tbody>
                {PROPS.map(row => row.section ? (
                  <tr key={row.section} className="h-6 bg-[#dcdcdc]">
                    <th colSpan={2} className="p-0 text-left font-normal">
                      <button type="button" className="flex h-[23px] w-full items-center justify-between pl-1 pr-[5px]">
                        {row.section}
                        <svg viewBox="0 0 8 9" className="h-[9px] w-2"><path d="M1 4l3-3 3 3M1 8l3-3 3 3" fill="none" stroke="#111" strokeWidth="1.4" /></svg>
                      </button>
                    </th>
                  </tr>
                ) : (
                  <tr key={row.name} className={`h-6 border-b border-dotted border-[#6d806f] ${row.muted ? "text-[#7d8a7e]" : ""}`}>
                    <th className="truncate border-r border-dotted border-[#6d806f] p-0 pl-3 text-left font-normal leading-[22px]">{row.name}</th>
                    <td className="overflow-hidden border-r border-dotted border-[#6d806f] p-0 leading-[22px]"><PropValue row={row} /></td>
                  </tr>
                ))}
              </tbody>
            </table>
          </div>
          <div className="flex w-5 shrink-0 flex-col pl-[2px]">
            <Arrow dir="up" label="向上滚动" />
            <div className="flex-1"><div className={`${THUMB} h-[64%]`}><Grip /></div></div>
            <Arrow dir="down" label="向下滚动" />
          </div>
        </div>
        <div className="flex h-[25px] shrink-0 items-end justify-between pl-[3px]">
          <a href="#help" className="self-center pt-[3px] text-[#0a5fb4] underline">属性帮助</a>
          <button type="button" disabled className="h-[23px] w-[98px] rounded-t-[3px] border border-b-0 border-[#b4b4b4] bg-[#f4f4f4] text-[#8a8a8a]">
            应用
          </button>
        </div>
      </div>
    </aside>
  );
}

export default function App() {
  return (
    <div className="flex h-screen flex-col overflow-hidden bg-[#eef0f1] font-['Open_Sans','Noto_Sans_CJK_SC',sans-serif]">
      <svg className="absolute h-0 w-0" aria-hidden="true">
        <defs>
          <linearGradient id="metal" x1="0" y1="0" x2="1" y2="1">
            <stop offset="0" stopColor="#fcfcfc" />
            <stop offset="1" stopColor="#cacdd3" />
          </linearGradient>
          <pattern id="hatch" width="4" height="4" patternUnits="userSpaceOnUse">
            <rect width="4" height="4" fill="#d2d4d7" />
            <path d="M0 4l4-4" stroke="#777c84" />
          </pattern>
        </defs>
      </svg>
      <Ribbon />
      <div className="h-[31px] shrink-0 bg-[#e0e1e3]" />
      <div className="flex min-h-0 flex-1">
        <ProjectBrowser />
        <ViewWindow />
        <Properties />
      </div>
    </div>
  );
}
